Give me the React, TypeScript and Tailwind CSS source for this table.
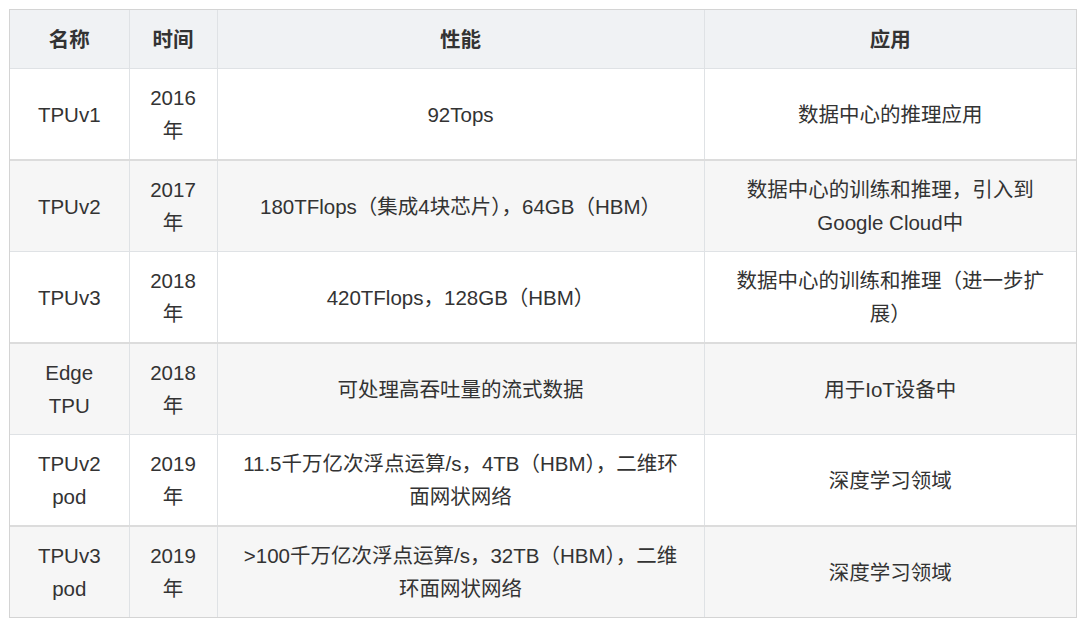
import { Fragment } from 'react';

interface Row {
  name: string[];
  year: string;
  perf: string[];
  app: string[];
}

const rows: Row[] = [
  { name: ['TPUv1'], year: '2016', perf: ['92Tops'], app: ['数据中心的推理应用'] },
  {
    name: ['TPUv2'],
    year: '2017',
    perf: ['180TFlops（集成4块芯片），64GB（HBM）'],
    app: ['数据中心的训练和推理，引入到', 'Google Cloud中'],
  },
  {
    name: ['TPUv3'],
    year: '2018',
    perf: ['420TFlops，128GB（HBM）'],
    app: ['数据中心的训练和推理（进一步扩', '展）'],
  },
  { name: ['Edge', 'TPU'], year: '2018', perf: ['可处理高吞吐量的流式数据'], app: ['用于IoT设备中'] },
  {
    name: ['TPUv2', 'pod'],
    year: '2019',
    perf: ['11.5千万亿次浮点运算/s，4TB（HBM），二维环', '面网状网络'],
    app: ['深度学习领域'],
  },
  {
    name: ['TPUv3', 'pod'],
    year: '2019',
    perf: ['>100千万亿次浮点运算/s，32TB（HBM），二维', '环面网状网络'],
    app: ['深度学习领域'],
  },
];

function Lines({ lines }: { lines: string[] }) {
  return (
    <>
      {lines.map((l, i) => (
        <Fragment key={i}>
          {i > 0 && <br />}
          {l}
        </Fragment>
      ))}
    </>
  );
}

export default function App() {
  const cell = 'border border-[#dfe2e5] px-4 py-3 text-center align-middle';
  const head = 'pt-[13px] font-semibold border-t-0';
  return (
    <div
      className="min-h-[626px] bg-white pl-[9px] pt-[9px] text-[#333] text-[20.5px] leading-[33px]"
      style={{ fontFamily: '"Liberation Sans", "Noto Sans CJK SC", sans-serif' }}
    >
      <div className="w-fit border border-[#d4d4d4]">
        <table className="table-fixed border-collapse w-[1066px]">
          <colgroup>
            <col className="w-[119px]" />
            <col className="w-[88px]" />
            <col className="w-[487px]" />
            <col className="w-[372px]" />
          </colgroup>
          <thead>
            <tr className="bg-[#f0f2f4]">
              <th className={`${cell} ${head} border-l-0`}>名称</th>
              <th className={`${cell} ${head}`}>时间</th>
              <th className={`${cell} ${head}`}>性能</th>
              <th className={`${cell} ${head} border-r-0`}>应用</th>
            </tr>
          </thead>
          <tbody>
            {rows.map((r, i) => {
              const even = i % 2 === 1;
              const top = even ? 'border-t-2 border-t-[#dcdcdc]' : '';
              const bottom = i === rows.length - 1 ? 'border-b-0' : '';
              return (
                <tr key={i} className={even ? 'bg-[#f6f6f6]' : 'bg-white'}>
                  <td className={`${cell} ${top} ${bottom} border-l-0`}>
                    <Lines lines={r.name} />
                  </td>
                  <td className={`${cell} ${top} ${bottom}`}>
                    {r.year}
                    <br />年
                  </td>
                  <td className={`${cell} ${top} ${bottom}`}>
                    <Lines lines={r.perf} />
                  </td>
                  <td className={`${cell} ${top} ${bottom} border-r-0`}>
                    <Lines lines={r.app} />
                  </td>
                </tr>
              );
            })}
          </tbody>
        </table>
      </div>
    </div>
  );
}
